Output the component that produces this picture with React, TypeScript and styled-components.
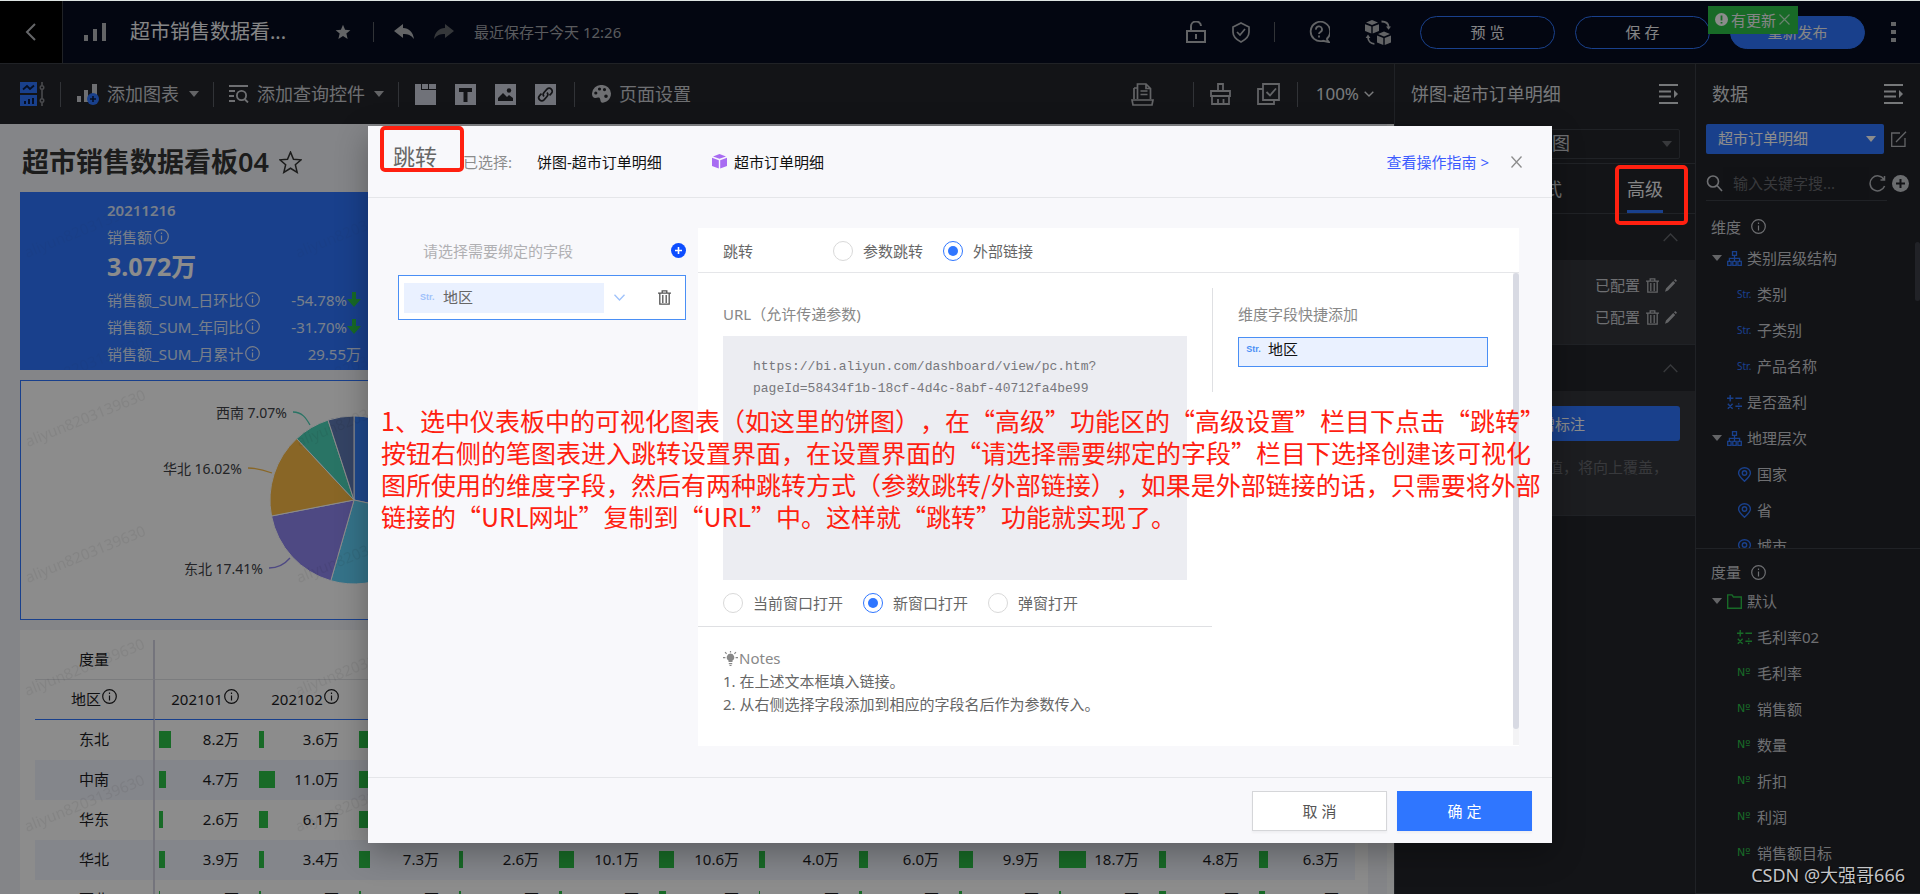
import React from "react";
import styled, { createGlobalStyle, css } from "styled-components";

const sans = '"Noto Sans", "Noto Sans CJK SC", sans-serif';
const cjk = '"Noto Sans CJK SC", sans-serif';

const color = {
  blue: "#2f76ff",
  field: "#4a8ff5",
  panel: "#24262b",
  panelDeep: "#212329",
  raised: "#34363b",
  line: "#3b3e45",
  text: "#c9cbd0",
  bright: "#f2f3f5",
  dim: "#66686e",
  green: "#2cc148",
  red: "#ff2010",
};

const GlobalStyle = createGlobalStyle`
  *, *::before, *::after { box-sizing: border-box; }
  body { margin: 0; font: 15px/20px ${sans}; color: #1f1f1f; }
  button, input, select, textarea { font: inherit; color: inherit; }
  button { padding: 0; border: 0; background: none; display: inline-flex; align-items: center; justify-content: center; }
  h1, h2, h3, p, ul, ol { margin: 0; padding: 0; font-weight: 400; }
  ul, ol { list-style: none; }
  svg { display: block; flex: none; }
`;

/* ---------- shell ---------- */

const Page = styled.div`
  position: relative;
  display: flex;
  flex-direction: column;
  height: 100vh;
  overflow: hidden;
  border-top: 1px solid #dde4e2;
  background: ${color.panel};
`;

const Header = styled.header`
  display: flex;
  align-items: center;
  flex: none;
  height: 63px;
  background: #060c1f;
  color: ${color.bright};
  border-bottom: 1px solid ${color.line};
`;

const BackButton = styled.button`
  width: 63px;
  align-self: stretch;
  background: #000;
  border-right: 1px solid ${color.line};
  color: #b9bbc0;
`;

const BoardName = styled.h1`
  font-size: 20px;
  line-height: 28px;
  margin-left: 24px;
  width: 205px;
`;

const IconButton = styled.button<{ $gap?: number; $tone?: string }>`
  margin-left: ${(p) => p.$gap ?? 0}px;
  color: ${(p) => p.$tone ?? "#b4b6bb"};
`;

const Divider = styled.span<{ $gap?: number; $h?: number }>`
  flex: none;
  width: 1px;
  height: ${(p) => p.$h ?? 20}px;
  margin-left: ${(p) => p.$gap ?? 0}px;
  background: #5a5d64;
`;

const SavedAt = styled.span`
  margin-left: 20px;
  color: #a4a6ac;
`;

const Actions = styled.div`
  display: flex;
  align-items: center;
  margin-left: auto;
  padding-right: 24px;
`;

const PillButton = styled.button<{ $solid?: boolean; $gap?: number }>`
  width: 135px;
  height: 33px;
  margin-left: ${(p) => p.$gap ?? 20}px;
  border: 1px solid ${color.blue};
  border-radius: 17px;
  background: ${(p) => (p.$solid ? color.blue : "transparent")};
`;

const PublishSlot = styled.div`
  position: relative;
`;

const UpdateTag = styled.div`
  position: absolute;
  left: -2px;
  top: -10px;
  display: flex;
  align-items: center;
  gap: 3px;
  width: 90px;
  height: 28px;
  padding-left: 7px;
  background: ${color.green};
`;

const Workspace = styled.div`
  display: flex;
  flex: 1;
  min-height: 0;
`;

const Main = styled.main`
  display: flex;
  flex-direction: column;
  flex: 1;
  min-width: 0;
`;

/* ---------- toolbar ---------- */

const Toolbar = styled.div`
  display: flex;
  align-items: center;
  flex: none;
  height: 60px;
  padding: 0 20px;
  color: ${color.text};
  font-size: 18px;
`;

const ToolButton = styled.button<{ $gap: number }>`
  gap: 8px;
  margin-left: ${(p) => p.$gap}px;
`;

const Caret = styled.span<{ $gap?: number; $tone?: string }>`
  width: 0;
  height: 0;
  margin-left: ${(p) => p.$gap ?? 0}px;
  border: 5px solid transparent;
  border-top: 6px solid ${(p) => p.$tone ?? "#b4b6bb"};
  border-bottom: 0;
`;

const Tile = styled.button<{ $gap?: number }>`
  width: 21px;
  height: 21px;
  margin-left: ${(p) => p.$gap ?? 19}px;
  background: #cdd0dc;
  color: ${color.panel};
`;

const ToolRight = styled.div`
  display: flex;
  align-items: center;
  margin-left: auto;
`;

const Zoom = styled.button`
  gap: 5px;
  margin-left: 18px;
  font-size: 17px;
  color: #dfe0e3;
`;

/* ---------- canvas ---------- */

const Canvas = styled.div`
  display: flex;
  flex: 1;
  min-height: 0;
  background: #f0f3f7;
`;

const CanvasBody = styled.div`
  flex: 1;
  min-width: 0;
  padding: 0 19px 0 20px;
  overflow: hidden;
`;

const CanvasTrack = styled.div`
  width: 7px;
  background: #fafbfc;
`;

const DashTitle = styled.div`
  display: flex;
  align-items: center;
  gap: 10px;
  height: 68px;
  padding: 8px 2px 0;
  color: #333;
`;

const DashName = styled.h2`
  font-size: 27px;
  line-height: 36px;
  font-weight: 600;
`;

const CardRow = styled.div<{ $cols: number }>`
  display: grid;
  grid-template-columns: repeat(${(p) => p.$cols}, 1fr);
  gap: 12px;
  margin-bottom: 10px;
`;

const Card = styled.section`
  position: relative;
  background: #fff;
  overflow: hidden;
`;

const KpiCard = styled(Card)`
  height: 178px;
  padding: 7px 0 8px 87px;
  background: ${color.blue};
  color: #dbe6fb;
`;

const KpiBody = styled.div`
  width: 254px;
  height: 163px;
  overflow: hidden;
`;

const KpiLine = styled.div`
  display: flex;
  align-items: center;
  gap: 2px;
  height: 27px;
  white-space: nowrap;
`;

const KpiDate = styled(KpiLine)`
  height: 22px;
  margin-bottom: 2px;
  font-weight: 600;
`;

const KpiValue = styled.div`
  height: 36px;
  font-size: 25px;
  line-height: 32px;
  font-weight: 700;
  color: #fff;
`;

const KpiFigure = styled.span`
  display: flex;
  align-items: center;
  margin-left: auto;
`;

const PieCard = styled(Card)`
  height: 240px;
  border: 1px solid ${color.blue};
`;

const PieSvg = styled.svg`
  margin: -1px;
  font: 14px ${sans};
  fill: #404247;
`;

const WatermarkLayer = styled.svg`
  position: absolute;
  left: 0;
  top: 0;
  width: 100%;
  height: 100%;
  pointer-events: none;
  font: 15px ${sans};
`;

const TableCard = styled(Card)`
  height: 400px;
  padding: 10px 13px 0 15px;
`;

const CrossTable = styled.table`
  width: 100%;
  table-layout: fixed;
  border-collapse: separate;
  border-spacing: 0;
  color: #1d1d1f;

  th, td { height: 40px; padding: 0 0 2px; font-weight: 400; text-align: center; }
  th:first-child { border-right: 2px solid #d3d3e2; }
  thead tr:first-child th { border-bottom: 1px solid #e1e2e6; }
  thead tr:last-child th { border-bottom: 1px solid ${color.blue}; }
  tbody tr:nth-child(even) { background: #f1f4fd; }
`;

const HeadCell = styled.span`
  display: inline-flex;
  align-items: flex-start;
  gap: 1px;
`;

const BarCell = styled.div`
  display: flex;
  align-items: center;
  justify-content: space-between;
  padding: 0 16px 0 4px;
`;

const Bar = styled.span`
  height: 17px;
  background: ${color.green};
`;

/* ---------- right panels ---------- */

const Panel = styled.aside<{ $w: number; $deep?: boolean }>`
  display: flex;
  flex-direction: column;
  flex: none;
  width: ${(p) => p.$w}px;
  min-height: 0;
  border-left: 1px solid ${color.line};
  background: ${(p) => (p.$deep ? color.panelDeep : color.panel)};
  color: ${color.text};
`;

const PanelHead = styled.div`
  display: flex;
  align-items: center;
  justify-content: space-between;
  flex: none;
  height: 60px;
  padding: 0 16px;
  font-size: 18px;
  color: #d8dade;
`;

const selectBase = css`
  appearance: none;
  height: 30px;
  padding: 0 12px 2px;
  border-radius: 2px;
  outline: 0;
`;

const SelectWrap = styled.div<{ $w: number }>`
  display: grid;
  align-items: center;
  width: ${(p) => p.$w}px;
  & > * { grid-area: 1 / 1; }
  & > span { justify-self: end; margin-right: 8px; }
`;

const ChartSelect = styled.select`
  ${selectBase}
  padding-left: 48px;
  border: 1px solid ${color.line};
  background: transparent;
  font-size: 18px;
`;

const DatasetSelect = styled.select`
  ${selectBase}
  border: 0;
  background: ${color.blue};
  color: #fff;
`;

const ChartRow = styled.div`
  display: flex;
  justify-content: flex-end;
  height: 39px;
  padding-right: 15px;
`;

const Tabs = styled.div`
  display: flex;
  justify-content: flex-end;
  height: 51px;
  gap: 65px;
  padding-right: 32px;
  border-top: 1px solid ${color.line};
  border-bottom: 1px solid ${color.line};
  font-size: 18px;
`;

const Tab = styled.button<{ $on?: boolean }>`
  padding-top: 3px;
  border-bottom: 3px solid ${(p) => (p.$on ? color.blue : "transparent")};
  color: ${(p) => (p.$on ? color.bright : color.text)};
`;

const FoldHead = styled.button`
  flex: none;
  justify-content: flex-end;
  height: 46px;
  padding-right: 17px;
  color: ${color.dim};
`;

const FoldBody = styled.div`
  flex: none;
  padding: 9px 15px 11px;
  border-bottom: 1px solid ${color.line};
  background: ${color.raised};
`;

const ConfigRow = styled.div`
  display: flex;
  align-items: center;
  justify-content: flex-end;
  gap: 6px;
  height: 32px;
  padding-right: 3px;
`;

const NoteButton = styled.button`
  gap: 8px;
  width: 100%;
  height: 35px;
  margin-top: 6px;
  border-radius: 3px;
  background: ${color.blue};
  color: #fff;
`;

const NoteHint = styled.p`
  height: 63px;
  padding: 16px 12px 0 0;
  text-align: right;
  color: ${color.dim};
`;

const DatasetRow = styled.div`
  display: flex;
  align-items: center;
  gap: 7px;
  padding-left: 10px;
`;

const SearchRow = styled.div`
  display: flex;
  align-items: center;
  flex: none;
  height: 47px;
  margin: 0 33px 0 10px;
  padding-top: 13px;
  border-bottom: 1px solid ${color.line};
`;

const SearchInput = styled.input`
  flex: none;
  width: 146px;
  height: 33px;
  padding: 0 10px 2px;
  border: 0;
  outline: 0;
  background: #1f2127;
  &::placeholder { color: ${color.dim}; opacity: 1; }
`;

const SearchTools = styled.div`
  display: flex;
  flex: none;
  align-items: center;
  gap: 6px;
`;

const FieldGroup = styled.section<{ $h?: number }>`
  flex: ${(p) => (p.$h ? "none" : 1)};
  height: ${(p) => (p.$h ? `${p.$h}px` : "auto")};
  min-height: 0;
  overflow: hidden;
  border-bottom: 1px solid ${color.line};
`;

const GroupName = styled.h3<{ $h: number }>`
  display: flex;
  align-items: center;
  gap: 10px;
  height: ${(p) => p.$h}px;
  padding: 12px 15px 0;
  font-size: 15px;
  line-height: 20px;
`;

const FieldScroll = styled.div`
  display: flex;
  justify-content: space-between;
`;

const FieldList = styled.ul`
  flex: 1;
`;

const FieldThumb = styled.span`
  width: 5px;
  height: 59px;
  margin-top: 2px;
  border-radius: 3px;
  background: #3c3f47;
`;

const FieldItem = styled.li<{ $child?: boolean }>`
  display: flex;
  align-items: center;
  gap: 5px;
  height: 36px;
  padding-left: ${(p) => (p.$child ? 41 : 17)}px;
`;

const FieldBranch = styled(FieldItem)<{ $open?: boolean }>`
  padding-left: ${(p) => (p.$open ? 16 : 31)}px;
`;

const TypeMark = styled.span<{ $number?: boolean }>`
  width: 15px;
  font: ${(p) => (p.$number ? '11px/16px "DejaVu Sans", sans-serif' : `10px/16px ${sans}`)};
  color: ${(p) => (p.$number ? color.green : color.blue)};
`;

/* ---------- dialog ---------- */

const Mask = styled.div`
  position: absolute;
  inset: 0;
  display: flex;
  justify-content: center;
  align-items: flex-start;
  padding: 125px 20px 0;
  background: rgba(0, 0, 0, 0.45);
`;

const Dialog = styled.div`
  position: relative;
  display: flex;
  flex-direction: column;
  width: 100%;
  max-width: 1184px;
  background: #f8f8fb;
  box-shadow: 0 10px 30px rgba(0, 0, 0, 0.3);
  color: #666;
`;

const DialogHead = styled.div`
  display: flex;
  align-items: center;
  height: 72px;
  padding: 0 30px 0 25px;
  border-bottom: 1px solid #e5e6e9;
`;

const DialogTitle = styled.h2`
  align-self: flex-start;
  width: 70px;
  padding-top: 15px;
  font-size: 22px;
  line-height: 30px;
`;

const Picked = styled.span<{ $gap: number }>`
  display: flex;
  align-items: center;
  gap: 7px;
  margin-left: ${(p) => p.$gap}px;
  color: #111;
`;

const Muted = styled.span`
  color: #8c8c8c;
`;

const Guide = styled.a`
  margin-left: auto;
  color: #3d5cff;
  text-decoration: none;
`;

const DialogBody = styled.div`
  display: flex;
  gap: 12px;
  padding: 30px 33px 31px 30px;
`;

const Binding = styled.section`
  flex: none;
  width: 288px;
`;

const BindHead = styled.div`
  display: flex;
  align-items: center;
  justify-content: space-between;
  height: 47px;
  padding: 0 0 2px 25px;
  color: #b0b0b3;
`;

const BindField = styled.div`
  display: flex;
  align-items: center;
  height: 45px;
  padding: 0 14px 0 5px;
  border: 1px solid ${color.field};
  background: #fff;
`;

const FieldChip = styled.div`
  display: flex;
  align-items: center;
  flex: none;
  gap: 6px;
  width: 200px;
  height: 30px;
  padding: 0 0 2px 16px;
  background: #eaf1ff;
`;

const StrMark = styled.span<{ $soft?: boolean }>`
  width: 17px;
  font: 700 9px/16px "Liberation Sans", sans-serif;
  color: ${(p) => (p.$soft ? "#9fc2fb" : color.field)};
`;

const Pane = styled.section`
  display: flex;
  flex-direction: column;
  flex: 1;
  min-width: 0;
  height: 518px;
  background: #fff;
`;

const ModeRow = styled.div`
  display: flex;
  align-items: center;
  flex: none;
  height: 45px;
  padding: 1px 25px 0;
  border-bottom: 1px solid #e5e6e9;
`;

const ModeName = styled.span`
  width: 110px;
`;

const RadioLabel = styled.label`
  display: flex;
  align-items: center;
  gap: 10px;
  margin-right: 20px;
`;

const Radio = styled.input.attrs({ type: "radio" })`
  appearance: none;
  display: grid;
  place-items: center;
  width: 20px;
  height: 20px;
  margin: 0;
  border: 1px solid #d9d9d9;
  border-radius: 50%;
  background: #fff;
  &:checked { border-color: ${color.blue}; }
  &:checked::after {
    content: "";
    width: 10px;
    height: 10px;
    border-radius: 50%;
    background: ${color.blue};
  }
`;

const PaneScroll = styled.div`
  display: flex;
  flex: 1;
  min-height: 0;
`;

const UrlColumn = styled.div`
  flex: none;
  width: 514px;
`;

const UrlForm = styled.div`
  padding: 31px 25px 0;
  border-bottom: 1px solid #dfe0e3;
`;

const FieldLabel = styled.label`
  display: block;
  height: 32px;
  color: #888;
`;

const UrlBox = styled.textarea`
  display: block;
  width: 100%;
  height: 244px;
  padding: 20px 30px;
  border: 0;
  outline: 0;
  resize: none;
  background: #ecedf2;
  color: #77777c;
  font: 13px/22px "Liberation Mono", monospace;
`;

const OpenModes = styled.div`
  display: flex;
  align-items: center;
  height: 46px;
`;

const Notes = styled.div`
  padding: 20px 25px 0;
  line-height: 23px;
  white-space: nowrap;
`;

const NotesHead = styled.div`
  display: flex;
  align-items: center;
  gap: 1px;
  color: #888;
`;

const QuickAdd = styled.div`
  flex: 1;
  height: 104px;
  margin-top: 15px;
  padding: 16px 25px 0;
  border-left: 1px solid #dfe0e3;
`;

const QuickName = styled.p`
  height: 32px;
  color: #888;
`;

const QuickField = styled.button`
  gap: 6px;
  width: 250px;
  height: 30px;
  padding: 0 6px 6px;
  justify-content: flex-start;
  border: 1px solid ${color.field};
  background: #eaf1ff;
  color: #111;
`;

const PaneTrack = styled.div`
  width: 6px;
  height: 472px;
  background: #f3f3f5;
`;

const PaneThumb = styled.div`
  height: 456px;
  border-radius: 3px;
  background: #d8dae3;
`;

const DialogFoot = styled.div`
  display: flex;
  justify-content: flex-end;
  gap: 10px;
  height: 66px;
  padding: 13px 20px 0;
  border-top: 1px solid #e5e6e9;
`;

const FootButton = styled.button<{ $primary?: boolean }>`
  width: 135px;
  height: 40px;
  border: 1px solid ${(p) => (p.$primary ? color.blue : "#d5d6d9")};
  background: ${(p) => (p.$primary ? color.blue : "#fff")};
  color: ${(p) => (p.$primary ? "#fff" : "#555")};
  box-shadow: 0 2px 2px rgba(0, 0, 0, 0.04);
`;

/* ---------- annotations ---------- */

const RedBox = styled.span<{ $w: number; $h: number }>`
  position: absolute;
  width: ${(p) => p.$w}px;
  height: ${(p) => p.$h}px;
  border: 4px solid ${color.red};
  border-radius: 5px;
  pointer-events: none;
`;

const TitleBox = styled(RedBox)`
  left: 12px;
  top: 0;
`;

const TabBox = styled(RedBox)`
  right: 232px;
  top: 164px;
`;

const Explain = styled.p`
  position: absolute;
  left: 13px;
  top: 278px;
  font: 25px/32px ${cjk};
  text-spacing-trim: space-all;
  white-space: nowrap;
  color: ${color.red};
`;

const Credit = styled.span`
  position: absolute;
  right: 15px;
  bottom: 6px;
  font: 18px/26px ${sans};
  color: #c4c5c7;
  text-shadow: 1px 1px 1px #000;
`;

/* ---------- icons ---------- */

type IconProps = { w?: number; h?: number; box?: string; sw?: number; children: React.ReactNode };

const Line = ({ w = 20, h = w, box, sw = 2, children }: IconProps) => (
  <svg width={w} height={h} viewBox={box ?? `0 0 ${w} ${h}`} fill="none" stroke="currentColor" strokeWidth={sw} aria-hidden>
    {children}
  </svg>
);

const Solid = ({ w = 20, h = w, box, children }: IconProps) => (
  <svg width={w} height={h} viewBox={box ?? `0 0 ${w} ${h}`} fill="currentColor" aria-hidden>
    {children}
  </svg>
);

const InfoIcon = ({ size = 15 }: { size?: number }) => (
  <Line w={size} box="0 0 15 15" sw={1.2}>
    <circle cx="7.5" cy="7.5" r="6.8" />
    <path d="M7.5 6.5V11.5M7.5 3.6V5" />
  </Line>
);

const TrashIcon = ({ w = 13 }: { w?: number }) => (
  <Line w={w} h={15} box="0 0 13 15" sw={1.3}>
    <path d="M0 3.2H13M4.2 3V.8H8.8V3M1.8 3.5V14.2H11.2V3.5M4.8 5V13M8.2 5V13" />
  </Line>
);

const PencilIcon = () => (
  <Solid w={12} h={13}>
    <path d="M8.2 2 10.2 4 3 11.6 0 12.8 1 9.6ZM9 1.2 10.2 0 12 1.8 10.9 3.1Z" />
  </Solid>
);

const CollapseIcon = () => (
  <Line w={20}>
    <path d="M0 1H19M0 7.5H12M0 12.5H12M0 19H19" />
    <path d="M15 6V14L19 10Z" fill="currentColor" stroke="none" />
  </Line>
);

const TreeIcon = () => (
  <Line w={15} sw={1.3}>
    <path d="M5.5.7H9.5V4.3H5.5ZM.7 10.3H4.1V14.3H.7ZM5.8 10.3H9.2V14.3H5.8ZM10.9 10.3H14.3V14.3H10.9ZM7.5 4.3V10M2.4 10V7.3H12.6V10" />
  </Line>
);

const CalcIcon = () => (
  <Line w={15} sw={1.4}>
    <path d="M0 3.2H6.4M3.2 0V6.4M8.4 3.2H15M.8 8.8 5.6 13.8M5.6 8.8.8 13.8M8.4 11.2H15M11.7 8.2V9.6M11.7 12.8V14.2" />
  </Line>
);

const PinIcon = () => (
  <Line w={15} sw={1.4}>
    <path d="M7.5 14.3C4 11 1.6 8.6 1.6 6.2A5.9 5.5 0 0 1 13.4 6.2C13.4 8.6 11 11 7.5 14.3Z" />
    <circle cx="7.5" cy="6" r="2.2" />
  </Line>
);

const FolderIcon = () => (
  <Line w={15} sw={1.4}>
    <path d="M.7.9H5L6.4 3H14.3V14.2H.7Z" />
  </Line>
);

const StarPath = "M10 1 12.6 7.2 19.2 7.7 14.2 12 15.8 18.6 10 15 4.2 18.6 5.8 12 .8 7.7 7.4 7.2Z";

const Tone = styled.span<{ $c: string }>`
  color: ${(p) => p.$c};
`;

/* ---------- data ---------- */

const months = [
  "202101", "202102", "202103", "202104", "202105", "202106",
  "202107", "202108", "202109", "202110", "202111", "202112",
];

const regions: { name: string; values: number[] }[] = [
  { name: "东北", values: [8.2, 3.6, 8.1, 5.2, 9.4, 7.7, 3.8, 8.8, 9.1, 10.2, 6.4, 7.0] },
  { name: "中南", values: [4.7, 11.0, 9.3, 6.6, 12.1, 8.4, 6.1, 12.4, 14.2, 9.8, 11.3, 10.7] },
  { name: "华东", values: [2.6, 6.1, 8.4, 9.9, 13.5, 11.2, 7.2, 15.1, 12.8, 14.0, 13.3, 16.2] },
  { name: "华北", values: [3.9, 3.4, 7.3, 2.6, 10.1, 10.6, 4.0, 6.0, 9.9, 18.7, 4.8, 6.3] },
  { name: "西北", values: [0.7, 1.3, 1.4, 1.3, 2.1, 4.8, 0.9, 1.8, 2.2, 1.1, 4.6, 4.2] },
];

const kpis = [
  { name: "销售额_SUM_日环比", value: "-54.78%", down: true },
  { name: "销售额_SUM_年同比", value: "-31.70%", down: true },
  { name: "销售额_SUM_月累计", value: "29.55万", down: false },
];

const slices = [
  { to: 102, fill: "#3883ff" },
  { to: 196, fill: "#62d1f9" },
  { to: 259, fill: "#8e85ee" },
  { to: 317, fill: "#fabb45" },
  { to: 342, fill: "#4cd3b8" },
  { to: 360, fill: "#607bb6" },
];

const point = (deg: number, r = 84) => {
  const a = ((deg - 90) * Math.PI) / 180;
  return `${(334 + r * Math.cos(a)).toFixed(1)} ${(120 + r * Math.sin(a)).toFixed(1)}`;
};

/* ---------- parts ---------- */

const Watermark = ({ id, strength = 0.06 }: { id: string; strength?: number }) => (
  <WatermarkLayer aria-hidden>
    <pattern id={id} width="271" height="136" patternUnits="userSpaceOnUse">
      <text x="7" y="66" transform="rotate(-22 7 66)" fill="#000" fillOpacity={strength}>
        aliyun8203139630
      </text>
    </pattern>
    <rect width="100%" height="100%" fill={`url(#${id})`} />
  </WatermarkLayer>
);

const TopBar = () => (
  <Header>
    <BackButton aria-label="返回">
      <Line w={12} h={18} sw={2}><path d="M10 1 2 9 10 17" /></Line>
    </BackButton>
    <IconButton $gap={21} aria-label="仪表板">
      <Solid w={22} h={18}><path d="M0 12H4V18H0ZM9 6H13V18H9ZM18 0H22V18H18Z" /></Solid>
    </IconButton>
    <BoardName>超市销售数据看...</BoardName>
    <IconButton aria-label="收藏">
      <Solid w={16} box="0 0 20 20"><path d={StarPath} /></Solid>
    </IconButton>
    <Divider $gap={22} />
    <IconButton $gap={20} aria-label="撤销">
      <Solid w={20} h={16}><path d="M9 0V4C15 4 19 8 20 15 17 11 14 10 9 10V14L0 7Z" /></Solid>
    </IconButton>
    <IconButton $gap={20} $tone="#62656b" aria-label="重做">
      <Solid w={20} h={16}><path d="M11 0V4C5 4 1 8 0 15 3 11 6 10 11 10V14L20 7Z" /></Solid>
    </IconButton>
    <SavedAt>最近保存于今天 12:26</SavedAt>
    <Actions>
      <IconButton aria-label="解锁">
        <Line w={20} h={22}><path d="M1 10H19V21H1ZM5 10V6A5 5 0 0 1 15 5M10 13V18" /></Line>
      </IconButton>
      <IconButton $gap={26} aria-label="安全">
        <Line w={18} h={21} sw={1.7}><path d="M9 1 17 5V10C17 15 13 18 9 20 5 18 1 15 1 10V5ZM5 10 8 13 13 7" /></Line>
      </IconButton>
      <Divider $gap={24} />
      <IconButton $gap={33} aria-label="帮助">
        <Line w={22} h={22} sw={1.8}>
          <path d="M18.5 18A9.7 9.7 0 1 0 15 19.8L21 21.2 18.5 18" />
          <path d="M8 8.6A3 3 0 1 1 12.4 11C11.2 11.8 11 12 11 13M11 14.6V16.4" />
        </Line>
      </IconButton>
      <IconButton $gap={35} aria-label="切换">
        <Solid w={26} h={25}>
          <path d="M7 0 13 2.6 7 5 1 2.6ZM0 4.2 6.3 6.6V13.5L0 11ZM14 4.2 7.7 6.6V13.5L14 11ZM19 11.4 25 14 19 16.4 13 14ZM12 15.4 18.3 17.9V25L12 22.4ZM26 15.4 19.7 17.9V25L26 22.4Z" />
          <path d="M16.5 1.5C21 1.5 23.4 4 23.6 7" fill="none" stroke="currentColor" strokeWidth="1.8" />
          <path d="M21 6.4H26L23.6 9.8ZM.6 18H5.4L3 14.6Z" />
          <path d="M3 17.5C3.2 21 5.6 23.8 9.4 23.8" fill="none" stroke="currentColor" strokeWidth="1.8" />
        </Solid>
      </IconButton>
      <PillButton $gap={29}>预 览</PillButton>
      <PillButton>保 存</PillButton>
      <PublishSlot>
        <PillButton $solid>重新发布</PillButton>
        <UpdateTag>
          <Solid w={13}>
            <circle cx="6.5" cy="6.5" r="6.5" fill="#fff" />
            <path d="M5.6 2.5H7.4V7.5H5.6ZM5.6 9H7.4V10.6H5.6Z" fill={color.green} />
          </Solid>
          有更新
          <IconButton $tone="#bfeec9" aria-label="关闭">
            <Line w={11} sw={1.2}><path d="M.5.5 10.5 10.5M10.5.5.5 10.5" /></Line>
          </IconButton>
        </UpdateTag>
      </PublishSlot>
      <IconButton $gap={26} aria-label="更多">
        <Solid w={5} h={20}><path d="M0 0H5V4H0ZM0 8H5V12H0ZM0 16H5V20H0Z" /></Solid>
      </IconButton>
    </Actions>
  </Header>
);

const ToolRow = () => (
  <Toolbar>
    <IconButton aria-label="组件">
      <Solid w={25} h={24}>
        <path d="M0 0H17V11H0ZM0 13H17V24H0Z" fill={color.blue} />
        <path d="M3 7.5 7 4 10 7 14 3.5" fill="none" stroke="#0b1d44" strokeWidth="1.8" />
        <path d="M4 19H6V22H4ZM8 17H10V22H8ZM12 16H14V22H12Z" fill="#0b1d44" />
        <path d="M22 0V3.5M22 7.5V16.5M22 20.5V24" stroke="#85878d" strokeWidth="1.6" />
        <g fill="none" stroke="#85878d" strokeWidth="1.4"><circle cx="22" cy="5.5" r="1.8" /><circle cx="22" cy="18.5" r="1.8" /></g>
      </Solid>
    </IconButton>
    <Divider $gap={15} $h={25} />
    <ToolButton $gap={16}>
      <Solid w={22} h={21}>
        <path d="M0 12H4V18H0ZM7 6H11V18H7ZM15 0H20V13H15Z" />
        <circle cx="16" cy="15" r="6" fill={color.blue} />
        <path d="M16 12V18M13 15H19" stroke="#0b1d44" strokeWidth="1.6" />
      </Solid>
      添加图表
      <Caret $gap={2} />
    </ToolButton>
    <Divider $gap={14} $h={25} />
    <ToolButton $gap={15}>
      <Line w={20} h={18} sw={1.8}>
        <path d="M0 1H19M0 6H6M0 11H5M0 16H6M16 14.5 19 17.5" /><circle cx="12.5" cy="10.5" r="4.6" />
      </Line>
      添加查询控件
      <Caret $gap={1} />
    </ToolButton>
    <Divider $gap={14} $h={25} />
    <Tile $gap={16} aria-label="选项卡">
      <Solid w={21}><path d="M6 0H7V5H21V6H6ZM13 0H14V5H13Z" /></Solid>
    </Tile>
    <Tile aria-label="文本"><Solid w={21}><path d="M4 4H17V8H12.5V18H8.5V8H4Z" /></Solid></Tile>
    <Tile aria-label="图片"><Solid w={21}><path d="M3 17V14L8 9 12 13 14 11 18 14V17Z" /><circle cx="14" cy="6.5" r="2.2" /></Solid></Tile>
    <Tile aria-label="链接">
      <Line w={21} sw={1.7}>
        <path d="M9 12.5A3 3 0 0 1 9 8.5L12 5.2A3 3 0 0 1 16.4 9.4L14.5 11.4M12 8.5A3 3 0 0 1 12 12.5L9 15.8A3 3 0 0 1 4.6 11.6L6.5 9.6" />
      </Line>
    </Tile>
    <Divider $gap={18} $h={25} />
    <ToolButton $gap={17}>
      <Solid w={19} h={18}>
        <path fillRule="evenodd" d="M9.5 0A9 9 0 0 0 0 8.5C0 14 4 13 6 12.6 8.6 12.2 8 15 9 17 10 19 19 16.5 19 8.5A9 9 0 0 0 9.5 0ZM3.8 6.4A1.6 1.6 0 1 0 3.8 9.6 1.6 1.6 0 1 0 3.8 6.4ZM7.5 2.4A1.6 1.6 0 1 0 7.5 5.6 1.6 1.6 0 1 0 7.5 2.4ZM12.5 3A1.6 1.6 0 1 0 12.5 6.2 1.6 1.6 0 1 0 12.5 3ZM14 9.4A1.8 1.8 0 1 0 14 13 1.8 1.8 0 1 0 14 9.4Z" />
      </Solid>
      页面设置
    </ToolButton>
    <ToolRight>
      <IconButton aria-label="目录">
        <Line w={23} h={23} sw={1.7}><path d="M6.5 16V1H15L19.5 5.5V16M15 1V5.5H19.5M9.5 8H16.5M9.5 11.5H16.5M3 5V16M3 5H6.5M1 17H22L21 22H2Z" /></Line>
      </IconButton>
      <Divider $gap={39} $h={25} />
      <IconButton $gap={16} aria-label="清空">
        <Line w={21} h={22} sw={1.8}><path d="M8 8V1H13V8M1 8H20V13H1ZM2 13V21H19V13M8 16V21M13.5 16V21" /></Line>
      </IconButton>
      <IconButton $gap={26} aria-label="批量">
        <Line w={23} h={22} sw={1.8}><path d="M6 1H22V17H6ZM6 6H1V21H17V17M9.5 9 13 12.5 19 5.5" /></Line>
      </IconButton>
      <Divider $gap={17} $h={25} />
      <Zoom>
        100%
        <Line w={10} h={6} sw={1.4}><path d="M.7.7 5 5 9.3.7" /></Line>
      </Zoom>
    </ToolRight>
  </Toolbar>
);

const Pie = () => (
  <PieSvg width={668} height={240} viewBox="0 0 668 240" role="img" aria-label="饼图">
    {slices.map((s, i) => {
      const from = i ? slices[i - 1].to : 0;
      return (
        <path
          key={s.to}
          d={`M334 120 L${point(from)} A84 84 0 0 1 ${point(s.to)} Z`}
          fill={s.fill}
          stroke="#fff"
          strokeWidth="1"
        />
      );
    })}
    <g fill="none" strokeWidth="1.3">
      <path d="M273 32C282 32 286 38 290 45" stroke="#4cd3b8" />
      <path d="M228 88C236 88 244 90 252 93" stroke="#fabb45" />
      <path d="M249 188C258 188 264 185 270 178" stroke="#8e85ee" />
    </g>
    <text x="267" y="38" textAnchor="end">西南 7.07%</text>
    <text x="222" y="94" textAnchor="end">华北 16.02%</text>
    <text x="243" y="194" textAnchor="end">东北 17.41%</text>
  </PieSvg>
);

const Board = () => (
  <Canvas>
    <CanvasBody>
      <DashTitle>
        <DashName>超市销售数据看板04</DashName>
        <Line w={23} h={23} box="0 0 20 20" sw={1.3}><path d={StarPath} /></Line>
      </DashTitle>
      <CardRow $cols={3}>
        <KpiCard>
          <KpiBody>
            <KpiDate>20211216</KpiDate>
            <KpiLine>销售额<InfoIcon /></KpiLine>
            <KpiValue>3.072万</KpiValue>
            {kpis.map((k) => (
              <KpiLine key={k.name}>
                {k.name}
                <InfoIcon />
                <KpiFigure>
                  {k.value}
                  {k.down && (
                    <Tone $c={color.green}>
                      <Solid w={14} h={15}><path d="M5 0H9V7H14L7 15 0 7H5Z" /></Solid>
                    </Tone>
                  )}
                </KpiFigure>
              </KpiLine>
            ))}
          </KpiBody>
          <Watermark id="wm-kpi" strength={0.03} />
        </KpiCard>
      </CardRow>
      <CardRow $cols={2}>
        <PieCard>
          <Pie />
          <Watermark id="wm-pie" />
        </PieCard>
      </CardRow>
      <TableCard>
        <CrossTable>
          <colgroup>
            <col />
            {months.map((m) => <col key={m} width={100} />)}
          </colgroup>
          <thead>
            <tr>
              <th scope="row">度量</th>
              <th colSpan={12} />
            </tr>
            <tr>
              <th scope="col"><HeadCell>地区<InfoIcon /></HeadCell></th>
              {months.map((m) => (
                <th key={m} scope="col"><HeadCell>{m}<InfoIcon /></HeadCell></th>
              ))}
            </tr>
          </thead>
          <tbody>
            {regions.map((r) => (
              <tr key={r.name}>
                <th scope="row">{r.name}</th>
                {r.values.map((v, i) => (
                  <td key={months[i]}>
                    <BarCell>
                      <Bar style={{ width: Math.round(v * 1.45) }} />
                      {v.toFixed(1)}万
                    </BarCell>
                  </td>
                ))}
              </tr>
            ))}
          </tbody>
        </CrossTable>
        <Watermark id="wm-table" />
      </TableCard>
    </CanvasBody>
    <CanvasTrack />
  </Canvas>
);

const Fold = ({ name }: { name: string }) => (
  <FoldHead aria-label={name}>
    <Line w={15} h={9} sw={1.3}><path d="M.7 8 7.5 1 14.3 8" /></Line>
  </FoldHead>
);

const ConfigPanel = () => (
  <Panel $w={301}>
    <PanelHead>饼图-超市订单明细<CollapseIcon /></PanelHead>
    <ChartRow>
      <SelectWrap $w={195}>
        <ChartSelect aria-label="图表类型"><option>饼图</option></ChartSelect>
        <Caret $tone="#66686e" />
      </SelectWrap>
    </ChartRow>
    <Tabs>
      <Tab>样式</Tab>
      <Tab $on>高级</Tab>
    </Tabs>
    <Fold name="高级设置" />
    <FoldBody>
      {["联动", "跳转"].map((n) => (
        <ConfigRow key={n} aria-label={n}>
          已配置
          <IconButton aria-label="删除"><TrashIcon /></IconButton>
          <IconButton aria-label="编辑"><PencilIcon /></IconButton>
        </ConfigRow>
      ))}
    </FoldBody>
    <Fold name="标注" />
    <FoldBody>
      <NoteButton>
        <Line w={12} sw={1.5}><path d="M6 0V12M0 6H12" /></Line>
        新增标注
      </NoteButton>
      <NoteHint>值，将向上覆盖，</NoteHint>
    </FoldBody>
  </Panel>
);

const dimensions = ["类别", "子类别", "产品名称"];
const places = ["国家", "省", "城市"];
const measures = ["毛利率", "销售额", "数量", "折扣", "利润", "销售额目标"];

const DataPanel = () => (
  <Panel $w={225} $deep>
    <PanelHead>数据<CollapseIcon /></PanelHead>
    <DatasetRow>
      <SelectWrap $w={178}>
        <DatasetSelect aria-label="数据集"><option>超市订单明细</option></DatasetSelect>
        <Caret $tone="#fff" />
      </SelectWrap>
      <IconButton aria-label="编辑数据集">
        <Line w={16} sw={1.3}><path d="M9 2H.7V15.3H14V7M5 11 15 .8" /></Line>
      </IconButton>
    </DatasetRow>
    <SearchRow>
      <Line w={17} sw={1.6}><circle cx="7" cy="6.5" r="5.5" /><path d="M11 10.5 16 16" /></Line>
      <SearchInput aria-label="搜索字段" placeholder="输入关键字搜..." />
      <SearchTools>
        <IconButton aria-label="刷新">
          <Line w={17} sw={1.5}><path d="M15 4.5A7.5 7.5 0 1 0 15.6 11M15.5 1V5H11.5" /></Line>
        </IconButton>
        <IconButton $tone="#c4c6cb" aria-label="新建字段">
          <Solid w={17}>
            <circle cx="8.5" cy="8.5" r="8.5" />
            <path d="M8.5 4V13M4 8.5H13" stroke={color.panelDeep} strokeWidth="2" />
          </Solid>
        </IconButton>
      </SearchTools>
    </SearchRow>
    <FieldGroup $h={348}>
      <GroupName $h={39}>维度<InfoIcon /></GroupName>
      <FieldScroll>
        <FieldList>
          <FieldBranch $open><Caret /><Tone $c={color.blue}><TreeIcon /></Tone>类别层级结构</FieldBranch>
          {dimensions.map((d) => (
            <FieldItem key={d} $child><TypeMark>Str.</TypeMark>{d}</FieldItem>
          ))}
          <FieldBranch><Tone $c={color.blue}><CalcIcon /></Tone>是否盈利</FieldBranch>
          <FieldBranch $open><Caret /><Tone $c={color.blue}><TreeIcon /></Tone>地理层次</FieldBranch>
          {places.map((d) => (
            <FieldItem key={d} $child><Tone $c={color.blue}><PinIcon /></Tone>{d}</FieldItem>
          ))}
        </FieldList>
        <FieldThumb />
      </FieldScroll>
    </FieldGroup>
    <FieldGroup>
      <GroupName $h={34}>度量<InfoIcon /></GroupName>
      <FieldList>
        <FieldBranch $open><Caret /><Tone $c={color.green}><FolderIcon /></Tone>默认</FieldBranch>
        <FieldItem $child><Tone $c={color.green}><CalcIcon /></Tone>毛利率02</FieldItem>
        {measures.map((m) => (
          <FieldItem key={m} $child><TypeMark $number>Nº</TypeMark>{m}</FieldItem>
        ))}
      </FieldList>
    </FieldGroup>
  </Panel>
);

const url = "https://bi.aliyun.com/dashboard/view/pc.htm?\npageId=58434f1b-18cf-4d4c-8abf-40712fa4be99";

const explainLines = [
  "1、选中仪表板中的可视化图表（如这里的饼图），在“高级”功能区的“高级设置”栏目下点击“跳转”",
  "按钮右侧的笔图表进入跳转设置界面，在设置界面的“请选择需要绑定的字段”栏目下选择创建该可视化",
  "图所使用的维度字段，然后有两种跳转方式（参数跳转/外部链接），如果是外部链接的话，只需要将外部",
  "链接的“URL网址”复制到“URL”中。这样就“跳转”功能就实现了。",
];

const JumpDialog = () => (
  <Dialog role="dialog" aria-label="跳转">
    <DialogHead>
      <DialogTitle>跳转</DialogTitle>
      <Muted>已选择:</Muted>
      <Picked $gap={25}>饼图-超市订单明细</Picked>
      <Picked $gap={50}>
        <Solid w={15}>
          <path d="M7.5 0 14 2.4 7.5 4.8 1 2.4ZM0 3.8 6.8 6.2V14.5L0 12ZM15 3.8 8.2 6.2V14.5L15 12Z" fill="#a86bf2" />
        </Solid>
        超市订单明细
      </Picked>
      <Guide href="#guide">查看操作指南 &gt;</Guide>
      <IconButton $gap={22} $tone="#8c8c8c" aria-label="关闭">
        <Line w={11} h={12} sw={1.3}><path d="M.5.5 10.5 11.5M10.5.5.5 11.5" /></Line>
      </IconButton>
    </DialogHead>
    <DialogBody>
      <Binding>
        <BindHead>
          请选择需要绑定的字段
          <IconButton $tone="#0d4dff" aria-label="添加字段">
            <Solid w={15}><circle cx="7.5" cy="7.5" r="7.5" /><path d="M7.5 4V11M4 7.5H11" stroke="#fff" strokeWidth="1.6" /></Solid>
          </IconButton>
        </BindHead>
        <BindField>
          <FieldChip><StrMark $soft>Str.</StrMark>地区</FieldChip>
          <IconButton $gap={10} $tone="#9fc2fb" aria-label="展开">
            <Line w={11} h={7} sw={1.3}><path d="M.5.7 5.5 6 10.5.7" /></Line>
          </IconButton>
          <IconButton $gap={33} $tone="#555" aria-label="删除"><TrashIcon /></IconButton>
        </BindField>
      </Binding>
      <Pane>
        <ModeRow role="radiogroup" aria-label="跳转">
          <ModeName>跳转</ModeName>
          <RadioLabel><Radio name="mode" />参数跳转</RadioLabel>
          <RadioLabel><Radio name="mode" defaultChecked />外部链接</RadioLabel>
        </ModeRow>
        <PaneScroll>
          <UrlColumn>
            <UrlForm>
              <FieldLabel htmlFor="jump-url">URL（允许传递参数)</FieldLabel>
              <UrlBox id="jump-url" defaultValue={url} spellCheck={false} />
              <OpenModes role="radiogroup" aria-label="打开方式">
                <RadioLabel><Radio name="open" />当前窗口打开</RadioLabel>
                <RadioLabel><Radio name="open" defaultChecked />新窗口打开</RadioLabel>
                <RadioLabel><Radio name="open" />弹窗打开</RadioLabel>
              </OpenModes>
            </UrlForm>
            <Notes>
              <NotesHead>
                <Solid w={15} h={15}>
                  <path d="M7.5 2.5A3.8 3.8 0 0 0 5.5 9.5V11H9.5V9.5A3.8 3.8 0 0 0 7.5 2.5ZM5.8 12H9.2V13.2H5.8ZM6.5 14H8.5V15H6.5ZM6.9 0H8.1V1.6H6.9ZM0 6H2.4V7.2H0ZM12.6 6H15V7.2H12.6ZM1.6 1.6 2.6.8 4 2.4 3.2 3.2ZM13.4 1.6 12.4.8 11 2.4 11.8 3.2Z" />
                </Solid>
                Notes
              </NotesHead>
              <p>1. 在上述文本框填入链接。</p>
              <p>2. 从右侧选择字段添加到相应的字段名后作为参数传入。</p>
            </Notes>
          </UrlColumn>
          <QuickAdd>
            <QuickName>维度字段快捷添加</QuickName>
            <QuickField><StrMark>Str.</StrMark>地区</QuickField>
          </QuickAdd>
          <PaneTrack><PaneThumb /></PaneTrack>
        </PaneScroll>
      </Pane>
    </DialogBody>
    <DialogFoot>
      <FootButton>取 消</FootButton>
      <FootButton $primary>确 定</FootButton>
    </DialogFoot>
    <TitleBox $w={84} $h={46} />
    <Explain>
      {explainLines.map((line) => (
        <React.Fragment key={line}>{line}<br /></React.Fragment>
      ))}
    </Explain>
  </Dialog>
);

export default function App() {
  return (
    <Page>
      <GlobalStyle />
      <TopBar />
      <Workspace>
        <Main>
          <ToolRow />
          <Board />
        </Main>
        <ConfigPanel />
        <DataPanel />
      </Workspace>
      <Mask>
        <JumpDialog />
      </Mask>
      <TabBox $w={73} $h={60} />
      <Credit>CSDN @大强哥666</Credit>
    </Page>
  );
}
